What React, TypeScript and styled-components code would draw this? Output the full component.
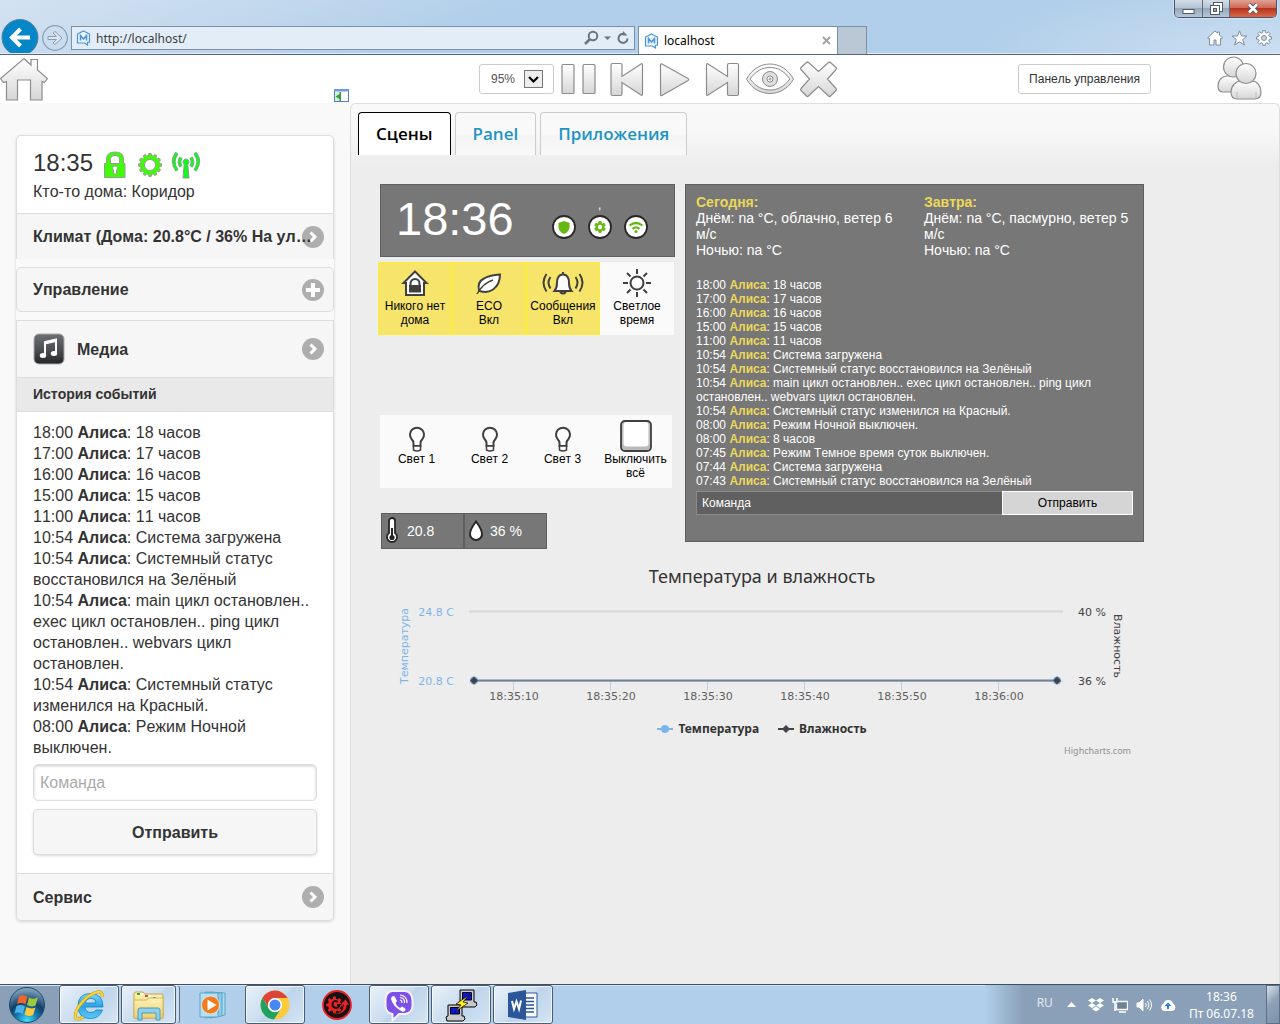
import React from "react";
import styled, { createGlobalStyle, css } from "styled-components";

const sans = `"Liberation Sans", Arial, sans-serif`;
const chrome = `"Noto Sans", "Open Sans", sans-serif`;

const GlobalStyle = createGlobalStyle`
  *, *::before, *::after { box-sizing: border-box; }
  body { margin: 0; background: #f9f9f9; font-family: ${sans}; font-kerning: none; color: #333; }
  button, input, select { font: inherit; font-kerning: none; color: inherit; margin: 0; }
  button { padding: 0; border: 0; background: none; cursor: pointer; }
  h1, h2, h3, p, ul { margin: 0; padding: 0; font-weight: normal; }
  ul { list-style: none; }
  a { color: inherit; text-decoration: none; }
  svg { display: block; flex: none; }
`;

/* ---------- window ---------- */

const Window = styled.div`
  display: flex;
  flex-direction: column;
  min-height: 100vh;
`;

const TitleBar = styled.header`
  display: flex;
  align-items: flex-end;
  height: 55px;
  padding-left: 1px;
  border-bottom: 1px solid #56637a;
  box-shadow: inset 0 -1px #e1ebf6;
  background:
    linear-gradient(160deg, #d3e2f1 0, #c4d9ee 90px, rgba(177, 207, 234, 0) 180px),
    radial-gradient(ellipse 300px 70px at 100% 100%, #cddff1, rgba(177, 207, 234, 0)),
    #b1cfea;
`;

const NavButton = styled.button<{ $lift?: number }>`
  padding-bottom: ${(p) => p.$lift ?? 1}px;
  margin-right: 3px;
`;

const AddressBar = styled.form`
  display: flex;
  align-items: center;
  flex: 0 1 564px;
  gap: 5px;
  height: 24px;
  margin: 0 3px 4px 0;
  padding: 0 5px 0 4px;
  border: 1px solid #7c90a8;
  background: #e3edf7;
  font: 12px/20px ${chrome};
`;

const UrlInput = styled.input`
  flex: 1;
  min-width: 0;
  padding: 2px 0 0;
  border: 0;
  outline: 0;
  background: none;
  color: #3c3f42;
`;

const BrowserTab = styled.div`
  display: flex;
  align-items: center;
  gap: 5px;
  width: 200px;
  height: 28px;
  padding: 0 6px 0 5px;
  border: 1px solid #7c90a8;
  border-bottom: 0;
  background: #fff;
  color: #000;
  font: 12px/20px ${chrome};
`;

const TabTitle = styled.span`
  flex: 1;
`;

const NewTab = styled.button`
  width: 29px;
  height: 28px;
  border: 1px solid #7c90a8;
  border-width: 1px 1px 0 0;
  background: #bac8d6;
`;

const WindowCorner = styled.div`
  display: flex;
  flex-direction: column;
  align-items: flex-end;
  justify-content: space-between;
  align-self: stretch;
  margin-left: auto;
  padding-right: 3px;
`;

const WindowControls = styled.div`
  display: flex;
  height: 18px;
  border: 1px solid #4a5668;
  border-top: 0;
  border-radius: 0 0 5px 5px;
  overflow: hidden;
  box-shadow: 0 0 2px #fff;
`;

const WindowControl = styled.button<{ $close?: boolean }>`
  display: grid;
  place-items: center;
  width: ${(p) => (p.$close ? 47 : 27)}px;
  background: ${(p) =>
    p.$close
      ? "linear-gradient(#e0a194, #cf6a58 45%, #b8321c 50%, #d8694c)"
      : "linear-gradient(#d3dde8, #b6c4d4 45%, #94a7bd 50%, #b5c6d8)"};
  & + & { border-left: 1px solid #5c6b80; }
`;

const ChromeTools = styled.div`
  display: flex;
  gap: 8px;
  padding: 0 5px 8px 0;
`;

/* ---------- toolbar ---------- */

const Toolbar = styled.nav`
  display: flex;
  align-items: center;
  height: 48px;
  padding-right: 17px;
  background: #fff;
`;

const ToolbarStart = styled.div`
  display: flex;
  align-items: flex-end;
  justify-content: space-between;
  flex: 0 0 350px;
  align-self: stretch;
  padding-bottom: 1px;
`;

const Player = styled.div`
  display: flex;
  align-items: center;
  margin-left: 129px;
`;

const Zoom = styled.label`
  display: grid;
  align-items: center;
  width: 75px;
  height: 30px;
  border: 1px solid #ccc;
  border-radius: 3px;
  background: #fff;
  font-size: 12px;
  color: #555;
  & > * { grid-area: 1 / 1; }
  & > svg { justify-self: end; margin-right: 10px; pointer-events: none; }
`;

const ZoomSelect = styled.select`
  height: 28px;
  padding: 0 11px;
  border: 0;
  outline: 0;
  appearance: none;
  background: none;
`;

const PanelLink = styled.a`
  margin-left: auto;
  padding: 0 10px;
  border: 1px solid #ccc;
  border-radius: 3px;
  font-size: 12px;
  line-height: 28px;
`;

const Users = styled.a`
  margin-left: 66px;
`;

/* ---------- sidebar ---------- */

const Content = styled.div`
  display: flex;
  flex: 1;
`;

const Sidebar = styled.aside`
  flex: 0 0 350px;
  min-width: 0;
  padding: 32px 16px 16px;
  background: #f9f9f9;
  font-size: 16px;
  line-height: 21px;
`;

const edge = css`
  border: 1px solid #ddd;
  background: #f6f6f6;
`;

const Menu = styled.div`
  border-radius: 5px;
  box-shadow: 0 1px 3px rgba(0, 0, 0, 0.15);
`;

const Status = styled.div`
  height: 79px;
  padding: 11px 16px;
  border: 1px solid #ddd;
  border-radius: 5px 5px 0 0;
  background: #fff;
`;

const StatusLine = styled.div`
  display: flex;
  align-items: center;
  gap: 8px;
  height: 31px;
  margin-bottom: 3px;
  font-size: 24px;
`;

const StatusIcons = styled.span`
  display: flex;
  align-items: center;
  gap: 7px;
  padding-top: 4px;
`;

const MenuItem = styled.button<{ $kind?: "open" | "group" | "media" | "last" }>`
  ${edge}
  display: flex;
  align-items: center;
  width: 100%;
  height: 45px;
  padding: 0 9px 0 16px;
  font-weight: bold;
  text-align: left;
  ${(p) => p.$kind === "open" && "border-top: 0; border-bottom: 0;"}
  ${(p) => p.$kind === "group" && "border-radius: 5px;"}
  ${(p) => p.$kind === "media" && "height: 58px; gap: 12px;"}
  ${(p) => p.$kind === "last" && "height: 48px; border-radius: 0 0 5px 5px;"}
`;

const MenuText = styled.span`
  flex: 1;
  min-width: 0;
  white-space: nowrap;
  z-index: 1;
`;

const Group = styled.div`
  padding: 8px 0;
  background: #f9f9f9;
`;

const Divider = styled.h3`
  padding: 0 16px;
  border: 1px solid #ddd;
  border-top: 0;
  background: #e9e9e9;
  font-size: 14px;
  font-weight: bold;
  line-height: 33px;
`;

const History = styled.div`
  padding: 10px 16px 18px;
  border: 1px solid #ddd;
  border-width: 0 1px;
  background: #fff;
`;

const SideForm = styled.form`
  display: grid;
  gap: 8px;
  margin-top: 6px;
`;

const SideInput = styled.input`
  width: 100%;
  height: 37px;
  padding: 0 6px;
  border: 1px solid #ddd;
  border-radius: 5px;
  background: #fff;
  box-shadow: inset 0 1px 3px rgba(0, 0, 0, 0.2);
  &::placeholder { color: #aaa; opacity: 1; }
`;

const SideButton = styled.button`
  ${edge}
  height: 46px;
  border-radius: 5px;
  box-shadow: 0 1px 3px rgba(0, 0, 0, 0.15);
  font-weight: bold;
`;

/* ---------- scene ---------- */

const Frame = styled.main`
  flex: 1;
  min-width: 0;
  padding: 8px 7px;
  border: 1px solid #ddd;
  border-bottom: 0;
  border-radius: 6px 6px 0 0;
  background: linear-gradient(#f9f9f9, #f7f7f7 30px, #ededed 60px);
`;

const Tabs = styled.div`
  display: flex;
  gap: 4px;
`;

const Tab = styled.button<{ $active?: boolean }>`
  height: 43px;
  padding: 0 17px;
  border: 1px solid ${(p) => (p.$active ? "#000" : "#ccc")};
  border-bottom: 0;
  border-radius: 4px 4px 0 0;
  background: ${(p) => (p.$active ? "#fff" : "linear-gradient(#f9f9f9 50%, #f4f4f4 55%, #f9f9f9)")};
  color: ${(p) => (p.$active ? "#000" : "#1c94c4")};
  font: 600 17px/22px "Open Sans", sans-serif;
`;

const Scene = styled.div`
  max-width: 786px;
  padding: 29px 0 0 20px;
`;

const Columns = styled.div`
  display: grid;
  grid-template-columns: 297px 1fr;
  gap: 10px;
`;

const dark = css`
  border: 1px solid #5f5f5f;
  background: #777;
  color: #fff;
`;

const Clock = styled.div`
  ${dark}
  display: flex;
  align-items: center;
  justify-content: space-between;
  height: 73px;
  margin: 0 0 5px 2px;
  padding: 0 25px 4px 15px;
  font-size: 47px;
`;

const Badges = styled.div`
  display: flex;
  gap: 10px;
  padding-top: 17px;
`;

const Badge = styled.span`
  position: relative;
`;

const Tick = styled.span`
  position: absolute;
  bottom: 28px;
  left: 11px;
  font-size: 12px;
  line-height: 14px;
`;

const Tiles = styled.div<{ $lights?: boolean }>`
  display: grid;
  grid-template-columns: repeat(4, ${(p) => (p.$lights ? 73 : 74)}px);
  padding-left: ${(p) => (p.$lights ? 2 : 0)}px;
  margin-bottom: ${(p) => (p.$lights ? 25 : 80)}px;
`;

const Tile = styled.button<{ $on?: boolean }>`
  display: flex;
  flex-direction: column;
  align-items: center;
  height: 73px;
  padding-top: 4px;
  border: 1px solid ${(p) => (p.$on ? "#fdee35" : "#fafafa")};
  background: ${(p) => (p.$on ? "#f7e56b" : "#fafafa")};
  color: #000;
  font-size: 12px;
  line-height: 14px;
`;

const Sensors = styled.div`
  display: flex;
  padding-left: 3px;
`;

const Sensor = styled.div`
  ${dark}
  display: flex;
  align-items: center;
  gap: 7px;
  width: 83px;
  height: 36px;
  padding-left: 4px;
  font-size: 14px;
`;

const InfoPanel = styled.section`
  ${dark}
  height: 358px;
  padding: 9px 10px;
  font-size: 12px;
  line-height: 14px;
`;

const Weather = styled.div`
  display: grid;
  grid-template-columns: 210px 1fr;
  gap: 18px;
  margin-bottom: 20px;
  font-size: 14px;
  line-height: 16px;
`;

const Accent = styled.b`
  color: #ecd75a;
`;

const CommandForm = styled.form`
  display: flex;
  margin-top: 3px;
`;

const CommandInput = styled.input`
  flex: 1;
  min-width: 0;
  height: 24px;
  padding: 0 5px;
  border: 1px solid #8b8b8b;
  border-right: 0;
  background: #606060;
  color: #fff;
`;

const CommandButton = styled.button`
  width: 131px;
  height: 24px;
  border: 1px solid #fff;
  background: #d5d5d5;
  color: #000;
`;

/* ---------- chart ---------- */

const Chart = styled.figure`
  margin: 15px 0 0 2px;
  text-align: center;
`;

const ChartTitle = styled.h2`
  margin-bottom: 1px;
  font: 18px/24px "Noto Sans", sans-serif;
`;

const Plot = styled.svg`
  width: 100%;
  height: auto;
  font: 11px "DejaVu Sans", sans-serif;
`;

const Legend = styled.figcaption`
  display: flex;
  justify-content: center;
  gap: 19px;
  font: bold 12px/16px "Noto Sans", sans-serif;
`;

const LegendItem = styled.span`
  display: flex;
  align-items: center;
  gap: 5px;
`;

const Credits = styled.a`
  display: block;
  margin: 7px 13px 0;
  color: #909090;
  font: 9px/14px "Noto Sans", sans-serif;
  text-align: right;
`;

/* ---------- taskbar ---------- */

const Taskbar = styled.footer`
  display: flex;
  height: 40px;
  border-top: 1px solid #3f5062;
  box-shadow: inset 0 1px #d5e4f2;
  background: linear-gradient(90deg, #8aa0b8 58px, #b1cfea 62px);
`;

const Start = styled.button`
  display: grid;
  place-items: center;
  width: 54px;
  margin-right: 5px;
`;

const Apps = styled.div`
  display: flex;
  gap: 2px;
  flex: 1;
`;

const AppButton = styled.button<{ $open?: boolean; $stack?: boolean }>`
  display: grid;
  place-items: center;
  width: ${(p) => (p.$stack ? 55 : 60)}px;
  margin-right: ${(p) => (p.$stack ? 5 : 0)}px;
  ${(p) =>
    p.$open &&
    css`
      border: 1px solid #4b5c70;
      border-radius: 3px;
      background: linear-gradient(135deg, #e9f1f9, #c9dcef 50%, #bdd4ec 52%, #d5e5f4);
      box-shadow: inset 0 0 0 1px rgba(255, 255, 255, 0.7);
    `}
  ${(p) => p.$stack && "box-shadow: inset 0 0 0 1px #eef5fb, 4px 0 0 -1px #c9dcef, 5px 0 0 -1px #5c6d80;"}
`;

const Tray = styled.div`
  display: flex;
  align-items: center;
  gap: 8px;
  padding-left: 52px;
  background: linear-gradient(90deg, #b1cfea, #8aa0b8 38px);
  color: #fff;
  font: 12px/17px ${chrome};
`;

const Language = styled.button`
  margin-right: 6px;
  padding-bottom: 5px;
  color: #e2e8ee;
`;

const TrayMore = styled.button`
  margin-right: 4px;
`;

const DateTime = styled.time`
  margin: 0 4px 0 5px;
  text-align: center;
`;

const ShowDesktop = styled.button`
  width: 14px;
  height: 39px;
  border: 1px solid #5d7084;
  background: linear-gradient(135deg, #d9e1e9, #8ca1b7 45%, #7e94ac);
`;

/* ---------- drawings ---------- */

function gear(cx: number, cy: number, outer: number, inner: number, teeth: number) {
  const points: string[] = [];
  const step = (Math.PI * 2) / teeth;
  for (let i = 0; i < teeth; i++) {
    const a = i * step - Math.PI / 2;
    [
      [-0.3, inner],
      [-0.2, outer],
      [0.2, outer],
      [0.3, inner],
    ].forEach(([k, r]) => {
      points.push(`${(cx + r * Math.cos(a + k * step)).toFixed(2)} ${(cy + r * Math.sin(a + k * step)).toFixed(2)}`);
    });
  }
  return `M${points.join("L")}Z`;
}

const HiddenSvg = styled.svg`
  position: absolute;
`;

const Defs = () => (
  <HiddenSvg width="0" height="0" aria-hidden="true">
    <defs>
      <linearGradient id="steel" x1="0" y1="0" x2="0" y2="1">
        <stop offset="0" stopColor="#fff" />
        <stop offset="1" stopColor="#d6d6d6" />
      </linearGradient>
      <radialGradient id="orb" cx=".5" cy=".95" r=".9">
        <stop offset="0" stopColor="#3fe0fc" />
        <stop offset=".35" stopColor="#1679b4" />
        <stop offset=".6" stopColor="#123f68" />
        <stop offset="1" stopColor="#7fa3bd" />
      </radialGradient>
      <linearGradient id="ie" x1="0" y1="0" x2="0" y2="1">
        <stop offset="0" stopColor="#7fd6fa" />
        <stop offset=".5" stopColor="#2aa5e6" />
        <stop offset="1" stopColor="#5cc8f6" />
      </linearGradient>
      <linearGradient id="folder" x1="0" y1="0" x2="0" y2="1">
        <stop offset="0" stopColor="#fdf3b4" />
        <stop offset="1" stopColor="#edd071" />
      </linearGradient>
      <linearGradient id="note" x1="0" y1="0" x2="0" y2="1">
        <stop offset="0" stopColor="#6b7073" />
        <stop offset=".55" stopColor="#4b4e50" />
        <stop offset="1" stopColor="#232425" />
      </linearGradient>
    </defs>
  </HiddenSvg>
);

const SiteIcon = () => (
  <svg width="15" height="16" viewBox="0 0 15 16" fill="none" stroke="#4a94d8">
    <path d="M7.5 1 13.5 4v8l-2 .5v2.500L8.500 13H1.500V4Z" strokeWidth="1.200" fill="#eef6fd" />
    <path d="M4.500 10.500v-5l3 3.500 3-3.500v5" strokeWidth="1.500" />
  </svg>
);

const steelPaths: Record<string, string[]> = {
  pause: ["M9 9.500h10q1 0 1 1v27q0 1-1 1H9q-1 0-1-1v-27q0-1 1-1Z", "M30 9.500h10q1 0 1 1v27q0 1-1 1H30q-1 0-1-1v-27q0-1 1-1Z"],
  previous: ["M10.500 8.500h8q1.500 0 1.500 1.500v11.500L39 9q1.500-1 1.500 1v29q0 2-1.500 1L20 27.500V39q0 1.500-1.500 1.500h-8Q9 40.500 9 39V10q0-1.500 1.500-1.500Z"],
  play: ["M12 9 38 23.500q1.500 1 0 2L12 40.500q-1.500.5-1.500-1V10q0-1.500 1.500-1Z"],
  next: ["M39 8.500h-8q-1.500 0-1.500 1.500v11.500L10 9q-1.500-1-1.500 1v29q0 2 1.500 1l19.500-12.500V39q0 1.500 1.500 1.500h8q1.500 0 1.500-1.500V10q0-1.500-1.500-1.500Z"],
  close: ["M12.500 7.500q1-1 2 0l10 9 10-9q1-1 2 0l5.500 5q1 1 0 2L33.500 24l8.500 9.500q1 1 0 2l-5.500 5.500q-1 1-2 0l-10-9.500-10 9.500q-1 1-2 0L7 35.500q-1-1 0-2L15.500 24 7 14.500q-1-1 0-2Z"],
  home: ["M24 4.500 31 11V5.500h6.500V16l10 8.500-3 4-2.500-1V46H30.500V26h-13v20h-11V27.500l-3 1-3-4Z"],
};

const Steel = ({ name }: { name: string }) => (
  <svg width="48" height="48" viewBox="0 0 48 48" fill="url(#steel)" stroke="#8c8c8c" strokeWidth="1.200">
    {steelPaths[name].map((d) => (
      <path key={d} d={d} />
    ))}
  </svg>
);

const Eye = () => (
  <svg width="48" height="48" viewBox="0 0 48 48" fill="url(#steel)" stroke="#8c8c8c">
    <path d="M.5 24C6 14 15 9 24 9s18 5 23.500 15C42 34 33 38.500 24 38.500S6 34 .5 24Z" />
    <path d="M4 24C10 16 16 12.500 24 12.500S38 16 44 24C38 31.500 32 35 24 35S10 31.500 4 24Z" fill="#fff" />
    <circle cx="24" cy="24" r="7.500" fill="#dedede" />
    <circle cx="24" cy="24" r="3" fill="#fff" />
    <circle cx="24" cy="24" r="1" fill="#fff" />
  </svg>
);

const People = () => (
  <svg width="46" height="48" viewBox="0 0 46 48" fill="url(#steel)" stroke="#8f8f8f" strokeWidth="1.200">
    <path d="M1 31c0-6 4-10 9-10h8c5 0 8 4 8 9v3q0 4-4 4H6q-5 0-5-6Z" />
    <circle cx="16.500" cy="12" r="10" />
    <path d="M14 37c0-6 5-11 10-11h11c5 0 9 5 9 11 0 5-2 7-6 7H20c-4 0-6-2-6-7Z" />
    <path d="M20 37v6M39 37v6" stroke="#c4c4c4" />
    <circle cx="29" cy="18.500" r="10" />
  </svg>
);

const RoundArrow = ({ plus }: { plus?: boolean }) => (
  <svg width="22" height="22" viewBox="0 0 22 22">
    <circle cx="11" cy="11" r="11" fill="#aeaeae" />
    <path
      d={plus ? "M11 4v14M4 11h14" : "m8.500 6.500 4.500 4.500-4.500 4.500"}
      fill="none"
      stroke="#fff"
      strokeWidth={plus ? 4 : 3}
    />
  </svg>
);

const Lock = () => (
  <svg width="28" height="28" viewBox="0 0 28 28" fill="#3dfc06" stroke="#999">
    <path
      fillRule="evenodd"
      d="M3.500 12.500h2V8q0-7 8.500-7t8.500 7v4.500h1.500v14H3.500Zm6 0h9V8.500q0-4-4.500-4t-4.500 4Z"
    />
    <path d="M14 15a2.200 2.200 0 0 1 1.500 4v4h-3v-4a2.200 2.200 0 0 1 1.500-4Z" fill="#fff" />
  </svg>
);

const Cog = () => (
  <svg width="28" height="28" viewBox="0 0 28 28" fill="#3dfc06" stroke="#999">
    <path d={gear(14, 14, 11.5, 9.5, 12)} />
    <circle cx="14" cy="14" r="5.500" fill="#fff" />
  </svg>
);

const Antenna = () => {
  const arcs = "M9 6.500q-3 4.500 0 9M19 6.500q3 4.500 0 9M5 2q-6.500 8.500 0 17.500M23 2q6.500 8.500 0 17.500";
  return (
    <svg width="30" height="28" viewBox="-1 0 30 28" fill="none">
      <path d={arcs} stroke="#999" strokeWidth="3.800" />
      <path d={arcs} stroke="#0dfc1a" strokeWidth="2.200" />
      <path d="M14 8a3 3 0 0 1 1.800 5.400L17 27h-6l1.200-13.600A3 3 0 0 1 14 8Z" fill="#0dfc1a" stroke="#999" />
    </svg>
  );
};

const MusicIcon = () => (
  <svg width="32" height="32" viewBox="0 0 32 32">
    <rect x="1" y="1" width="30" height="30" rx="5" fill="url(#note)" stroke="#aaa" />
    <path d="M12 22V9l11-2.500V20" fill="none" stroke="#fff" strokeWidth="2" />
    <path d="M12 8.500 23 6v3l-11 2.500Z" fill="#fff" />
    <ellipse cx="10" cy="22.500" rx="3.200" ry="2.500" fill="#fff" />
    <ellipse cx="21" cy="20.500" rx="3.200" ry="2.500" fill="#fff" />
  </svg>
);

const badgeShapes = {
  shield: <path d="M13 7l5.500 2v4q0 4.500-5.500 7-5.500-2.500-5.500-7V9Z" fill="#63b90f" />,
  gear: (
    <>
      <path d={gear(13, 13, 5.5, 4, 6)} fill="#63b90f" stroke="#63b90f" />
      <circle cx="13" cy="13" r="2.200" fill="#fff" />
    </>
  ),
  wifi: (
    <>
      <path d="M6.500 11.500q6.500-5 13 0M9.500 14.800q3.500-2.800 7 0" fill="none" stroke="#63b90f" strokeWidth="2.200" />
      <circle cx="13" cy="17.500" r="1.600" fill="#63b90f" />
    </>
  ),
};

const BadgeIcon = ({ name }: { name: keyof typeof badgeShapes }) => (
  <svg width="26" height="26" viewBox="0 0 26 26">
    <circle cx="13" cy="13" r="11" fill="#fff" stroke="#272727" strokeWidth="1.800" />
    {badgeShapes[name]}
  </svg>
);

const line = { fill: "none", stroke: "#404040", strokeWidth: 2 };

const HomeLock = () => (
  <svg width="34" height="32" viewBox="0 0 34 32" {...line}>
    <path d="M17 4.500 5.500 16H8v12h18V16h2.500Z" fill="#fff" />
    <path d="M12.500 19v-2.500a4.500 4.500 0 0 1 9 0V19" />
    <path d="M11 18h12v7.500H11Z" fill="#404040" stroke="none" />
  </svg>
);

const Leaf = () => (
  <svg width="34" height="32" viewBox="0 0 34 32" {...line}>
    <path d="M7 23.500Q5 15 12 11.500 18 8 28 7.500q0 10-7 15-6 4-13 1.500Z" fill="#fff" />
    <path d="M5 27q6-11 16-14" strokeWidth="1.500" />
  </svg>
);

const Bell = () => (
  <svg width="46" height="32" viewBox="0 0 46 32" {...line}>
    <path d="M14.500 24h17q-2.500-3-2.500-8 0-8.500-6-8.500T17 16q0 5-2.500 8Z" fill="#fff" />
    <path d="M20 25q3 3 6 0M23 5v2" />
    <path d="M10.500 10q-4 5.500 0 11.500M6.500 7q-6 8.500 0 17.500M35.500 10q4 5.500 0 11.500M39.500 7q6 8.500 0 17.500" />
  </svg>
);

const Sun = () => (
  <svg width="34" height="32" viewBox="0 0 34 32" {...line}>
    <circle cx="17" cy="16" r="6.500" fill="#fff" />
    <path d="M17 2v5M17 25v5M3 16h5M26 16h5M7 6l3.500 3.500M23.500 22.500 27 26M7 26l3.500-3.500M23.500 9.500 27 6" />
  </svg>
);

const Bulb = () => (
  <svg width="34" height="32" viewBox="0 0 34 32" {...line}>
    <path d="M13.500 26v-3q0-2-2-4a7 7 0 1 1 11 0q-2 2-2 4v3Z" fill="#fff" />
    <path d="M13.500 26v4q3.500 2 7 0v-4Z" fill="#fff" strokeWidth="1.500" />
  </svg>
);

const Switch = () => (
  <svg width="34" height="32" viewBox="0 0 34 32">
    <rect x="2" y="1" width="30" height="30" rx="4" fill="#bbb" stroke="#404040" strokeWidth="1.800" />
    <rect x="4.500" y="2" width="25" height="24.500" rx="3" fill="#fff" />
  </svg>
);

const Thermometer = () => (
  <svg width="14" height="28" viewBox="1 0 14 28">
    <path d="M4 16V4a3 3 0 0 1 6 0v12a5 5 0 1 1-6 0Z" fill="#fff" stroke="#272727" strokeWidth="1.800" />
    <path d="M7 11v9" stroke="#272727" strokeWidth="2" />
    <circle cx="7" cy="20.500" r="2.600" fill="#272727" />
  </svg>
);

const Drop = () => (
  <svg width="14" height="22" viewBox="0 0 14 22">
    <path d="M7 1.500q6 8 6 12.500a6 6 0 0 1-12 0Q1 9.500 7 1.500Z" fill="#fff" stroke="#272727" strokeWidth="2" />
  </svg>
);

/* ---------- taskbar drawings ---------- */

const StartOrb = () => (
  <svg width="38" height="38" viewBox="0 0 38 38">
    <circle cx="19" cy="19" r="17.500" fill="url(#orb)" stroke="#1e4869" />
    <path d="M11 10.500q4-2.500 8.500.5l-2 7.500q-4-2.500-8.500-.5Z" fill="#f0642a" />
    <path d="M21 11.500q4 2.500 9 0l-2.500 8q-4 2-8.500-.5Z" fill="#9ccb3b" />
    <path d="M8.500 20q4.500-2 8.500.5l-2.500 7.500q-4-2.500-8-.5Z" fill="#4fb1ea" />
    <path d="M18.500 21q4.500 2.500 9 .5l-2.500 7.500q-4.500 2-8.500-.5Z" fill="#fbc93a" />
  </svg>
);

const InternetExplorer = () => (
  <svg width="34" height="34" viewBox="0 0 34 34" fill="none">
    <path
      fillRule="evenodd"
      d="M31 19H13q.5 5.500 6 5.500 3.500 0 5-2.500h6.500q-3 8.500-12 8.500Q6 30.500 6 18T18.500 5.500 31 19Zm-7-4q-.5-4.500-5-4.500T13 15Z"
      fill="url(#ie)"
      stroke="#1581c4"
      strokeWidth=".8"
    />
    <path d="M30 9q1-6-4.500-5Q17 6 9.500 15T3.500 30q2.500 2.500 8-1" stroke="#c99a10" strokeWidth="3" />
    <path d="M30 9q1-6-4.500-5Q17 6 9.500 15T3.500 30q2.500 2.500 8-1" stroke="#fcd52e" strokeWidth="2" />
  </svg>
);

const Explorer = () => (
  <svg width="34" height="34" viewBox="0 0 34 34">
    <path d="M2 6q0-2 2-2h7l2 2h16q2 0 2 2v22H2Z" fill="url(#folder)" stroke="#c9a548" />
    <path d="M5 5h6v2H5ZM12 7h7v2h-7ZM21 9h7v2h-7Z" fill="#fff" />
    <path d="M5 5h3v2H5Z" fill="#2cb233" />
    <path d="M13 7h3v2h-3Z" fill="#d8472b" />
    <path d="M21 9h3v2h-3Z" fill="#2c83e0" />
    <path d="M2 12h13l2-2h14v20H2Z" fill="url(#folder)" stroke="#d4b456" />
    <path d="M6 32V22q0-2 2-2h18q2 0 2 2v10h-4v-7H10v7Z" fill="#8fcfea" stroke="#4a9cc0" />
  </svg>
);

const MediaPlayer = () => (
  <svg width="34" height="34" viewBox="0 0 34 34">
    <path d="m14 4 15 1v22l-15 3Z" fill="#a8dcf2" stroke="#5aa4c8" />
    <path d="m9 4 17 1v23l-17 2Z" fill="#8bcbe9" stroke="#5aa4c8" />
    <path d="M4 5h18v24H4Z" fill="#b4e0f3" stroke="#5aa4c8" />
    <circle cx="14.500" cy="17" r="9" fill="#f6791c" stroke="#e0e0e0" />
    <path d="m11.500 11.500 9 5.500-9 5.500Z" fill="#fff" />
  </svg>
);

const ChromeIcon = () => (
  <svg width="32" height="32" viewBox="0 0 32 32">
    <circle cx="16" cy="16" r="14.500" fill="#fbcb3b" />
    <path d="M3.500 8.700A14.500 14.500 0 0 1 28.600 9H16a7 7 0 0 0-6.300 10Z" fill="#dc4437" />
    <path d="M3.500 8.700A14.500 14.500 0 0 0 15 30.500l7-11a7 7 0 0 1-12.300 0Z" fill="#1da261" />
    <circle cx="16" cy="16" r="7" fill="#fff" />
    <circle cx="16" cy="16" r="5.500" fill="#4688f1" />
  </svg>
);

const RedGear = () => (
  <svg width="32" height="32" viewBox="0 0 32 32">
    <circle cx="16" cy="16" r="14" fill="#171314" stroke="#ea2227" strokeWidth="1.800" />
    <path d={gear(13.5, 16, 8.5, 6.5, 8)} fill="#ea2227" />
    <path d="M13 24.500q9 0 9.500-8.500H19l5.500-6 4 6H26q-1 9.500-13 9.500Z" fill="#ea2227" stroke="#171314" strokeWidth=".6" />
    <path d="M17 13q-4-2.500-5.500 1.500-.5 4 3.500 4.500 3 0 3-3h-2" fill="none" stroke="#171314" strokeWidth="2" />
  </svg>
);

const Viber = () => (
  <svg width="32" height="34" viewBox="0 0 32 34">
    <path
      d="M9 3h13q7 1 7.500 9v6q-.5 7-7.500 8h-6l-6.500 6.500V26Q3 25 2.500 18v-7Q3 4 9 3Z"
      fill="#7d51e8"
      stroke="#f5f2ff"
      strokeWidth="2"
    />
    <path d="M10 8q-2 1-2 3 1.500 7 11 12.500 2 1 3.500-1.500.5-1-1-2l-2.500-1.500-2 1.500q-3.500-1.500-4.500-5l1.500-2L12 9q-1-1.500-2-1Z" fill="#fff" />
    <path d="M17 12q2 0 2 3M17 9.500q5 .5 4.500 5.500M17 7q7 .5 7 8" fill="none" stroke="#fff" strokeWidth="1.200" />
  </svg>
);

const Putty = () => (
  <svg width="34" height="34" viewBox="0 0 34 34" stroke="#000">
    <path d="M16 2h14v12h2l1 3-2 2H15l-1-4 2-2Z" fill="#c9c9c9" />
    <path d="M18.500 4.500h9v7.500h-9Z" fill="#0b17d8" />
    <path d="M4 17h14v11h2l1 3-2 2H3l-1-4 2-1Z" fill="#c9c9c9" />
    <path d="M6.500 19.500h9V26h-9Z" fill="#0b17d8" />
    <path d="m25 7-13 9 5 1-6 7 13-9-5-1Z" fill="#ffee1a" strokeWidth=".7" />
  </svg>
);

const Word = () => (
  <svg width="34" height="32" viewBox="0 0 34 32">
    <path d="M17 4h14v24H17Z" fill="#fff" stroke="#2b579a" />
    <path d="M20 9h8M20 12.500h8M20 16h8M20 19.500h8M20 23h8" stroke="#2b579a" strokeWidth="1.500" />
    <path d="M2 4 20 1v30L2 28Z" fill="#2b579a" />
    <path d="m6 12 2 8 2.500-7.500L13 20l2-8.500" fill="none" stroke="#fff" strokeWidth="2" />
  </svg>
);

/* ---------- data ---------- */

const sideHistory = [
  ["18:00", "18 часов"],
  ["17:00", "17 часов"],
  ["16:00", "16 часов"],
  ["15:00", "15 часов"],
  ["11:00", "11 часов"],
  ["10:54", "Система загружена"],
  ["10:54", "Системный статус восстановился на Зелёный"],
  ["10:54", "main цикл остановлен.. exec цикл остановлен.. ping цикл остановлен.. webvars цикл остановлен."],
  ["10:54", "Системный статус изменился на Красный."],
  ["08:00", "Режим Ночной выключен."],
];

const sceneHistory = [
  ...sideHistory,
  ["08:00", "8 часов"],
  ["07:45", "Режим Темное время суток выключен."],
  ["07:44", "Система загружена"],
  ["07:43", "Системный статус восстановился на Зелёный"],
];

const ticks = ["18:35:10", "18:35:20", "18:35:30", "18:35:40", "18:35:50", "18:36:00"];

const apps = [
  { name: "Internet Explorer", icon: <InternetExplorer />, open: true },
  { name: "Проводник", icon: <Explorer />, open: true, stack: true },
  { name: "Windows Media Player", icon: <MediaPlayer /> },
  { name: "Google Chrome", icon: <ChromeIcon />, open: true },
  { name: "Driver Booster", icon: <RedGear /> },
  { name: "Viber", icon: <Viber />, open: true },
  { name: "PuTTY", icon: <Putty />, open: true },
  { name: "Word", icon: <Word />, open: true },
];

const stay = (e: React.FormEvent) => e.preventDefault();

/* ---------- sections ---------- */

const BrowserHeader = () => (
  <TitleBar>
    <NavButton aria-label="Назад">
      <svg width="38" height="34" viewBox="0 0 38 34">
        <circle cx="19" cy="18.500" r="18" fill="#0486c8" stroke="#5d7f9c" />
        <path d="M29 18.500H12M19.500 10 11 18.500l8.500 8.500" fill="none" stroke="#fff" strokeWidth="4" />
      </svg>
    </NavButton>
    <NavButton aria-label="Вперёд" $lift={3}>
      <svg width="26" height="26" viewBox="0 0 26 26" fill="none" stroke="#8c9db2">
        <circle cx="13" cy="13" r="12.300" strokeWidth="1.200" />
        <path d="M6 11.500h8.500L11 8l2-1.500 7 6.500-7 6.500-2-1.500 3.500-3.500H6Z" fill="#dbe7f3" />
      </svg>
    </NavButton>
    <AddressBar onSubmit={stay}>
      <SiteIcon />
      <UrlInput aria-label="Адрес" defaultValue="http://localhost/" />
      <svg width="45" height="16" viewBox="0 0 45 16" fill="none" stroke="#6d747c" strokeWidth="2">
        <circle cx="9" cy="6" r="4.300" />
        <path d="m6 9-5 5" strokeWidth="2.500" />
        <path d="M20 6.500h7l-3.500 3.500Z" fill="#6d747c" stroke="none" />
        <path d="M43.500 8.500a4.500 4.500 0 1 1-3.500-4.500" />
        <path d="M39 1l4.500 4.500H39Z" fill="#6d747c" stroke="none" />
      </svg>
    </AddressBar>
    <BrowserTab>
      <SiteIcon />
      <TabTitle>localhost</TabTitle>
      <button aria-label="Закрыть вкладку">
        <svg width="9" height="9" viewBox="0 0 9 9" stroke="#a2a2a2" strokeWidth="2">
          <path d="m1 1 7 7M8 1 1 8" />
        </svg>
      </button>
    </BrowserTab>
    <NewTab aria-label="Новая вкладка" />
    <WindowCorner>
      <WindowControls>
        <WindowControl aria-label="Свернуть">
          <svg width="13" height="14" viewBox="0 0 13 14">
            <rect x="1" y="7.500" width="11" height="4" fill="#fff" stroke="#535a6a" />
          </svg>
        </WindowControl>
        <WindowControl aria-label="Развернуть">
          <svg width="13" height="13" viewBox="0 0 13 13" fill="#fff" stroke="#535a6a">
            <rect x="3.500" y=".5" width="9" height="9" />
            <rect x=".5" y="3.500" width="9" height="9" />
            <rect x="3.500" y="6.500" width="3" height="3" fill="#9aabc0" />
          </svg>
        </WindowControl>
        <WindowControl aria-label="Закрыть" $close>
          <svg width="12" height="11" viewBox="0 0 12 11">
            <path d="M2 1.500 10 9.500M10 1.500 2 9.500" stroke="#535a6a" strokeWidth="4.500" />
            <path d="M2 1.500 10 9.500M10 1.500 2 9.500" stroke="#fff" strokeWidth="2.500" />
          </svg>
        </WindowControl>
      </WindowControls>
      <ChromeTools>
        <button aria-label="Домой">
          <svg width="16" height="16" viewBox="0 0 16 16" fill="#fff" stroke="#7f8ea1">
            <path d="M8 1 .500 8l1.500 1 .5-.5V15H7v-5h2v5h4.500V8.500l.5.5 1.500-1-3-3V2h-2v1Z" />
          </svg>
        </button>
        <button aria-label="Избранное">
          <svg width="17" height="16" viewBox="0 0 17 16" fill="#fff" stroke="#7f8ea1">
            <path d="m8.500.800 2 5.200h5.500l-4.300 3.500 1.600 5.500-4.800-3.200L3.700 15l1.600-5.500L1 6h5.500Z" />
          </svg>
        </button>
        <button aria-label="Сервис">
          <svg width="16" height="16" viewBox="0 0 16 16" fill="#fff" stroke="#7f8ea1">
            <path d={gear(8, 8, 7.5, 5.6, 8)} />
            <circle cx="8" cy="8" r="2.500" fill="#bfd5eb" />
          </svg>
        </button>
      </ChromeTools>
    </WindowCorner>
  </TitleBar>
);

const TopToolbar = () => (
  <Toolbar>
    <ToolbarStart>
      <a href="#home" aria-label="Главная">
        <Steel name="home" />
      </a>
      <button aria-label="Скрыть панель">
        <svg width="17" height="14" viewBox="0 0 17 14">
          <rect x="1.500" y="1.500" width="14" height="12" fill="#fff" stroke="#4f80c2" />
          <path d="M1 1h15v2.500H1Z" fill="#6b9bdc" />
          <path d="M2 4h6v9H2Z" fill="#d4efd2" />
          <path d="M8 4v9H6.500v-2L2.500 8.500l4-2.500V4Z" fill="#379b3b" />
        </svg>
      </button>
    </ToolbarStart>
    <Player>
      <Zoom>
        <ZoomSelect aria-label="Масштаб" defaultValue="95">
          <option value="95">95%</option>
          <option value="100">100%</option>
        </ZoomSelect>
        <svg width="19" height="18" viewBox="0 0 19 18">
          <rect x=".5" y=".5" width="18" height="17" fill="#eee" stroke="#777" />
          <path d="m5 7 4.500 4.500L14 7" fill="none" stroke="#000" strokeWidth="2.200" />
        </svg>
      </Zoom>
      <button aria-label="Пауза"><Steel name="pause" /></button>
      <button aria-label="Предыдущий"><Steel name="previous" /></button>
      <button aria-label="Воспроизвести"><Steel name="play" /></button>
      <button aria-label="Следующий"><Steel name="next" /></button>
      <button aria-label="Просмотр"><Eye /></button>
      <button aria-label="Закрыть"><Steel name="close" /></button>
    </Player>
    <PanelLink href="#admin">Панель управления</PanelLink>
    <Users href="#users" aria-label="Пользователи">
      <People />
    </Users>
  </Toolbar>
);

const SidePanel = () => (
  <Sidebar>
    <Menu>
      <Status>
        <StatusLine>
          <span>18:35</span>
          <StatusIcons>
            <Lock />
            <Cog />
            <Antenna />
          </StatusIcons>
        </StatusLine>
        <p>Кто-то дома: Коридор</p>
      </Status>
      <MenuItem $kind="open">
        <MenuText>Климат (Дома: 20.8°C / 36% На ул…</MenuText>
        <RoundArrow />
      </MenuItem>
      <Group>
        <MenuItem $kind="group">
          <MenuText>Управление</MenuText>
          <RoundArrow plus />
        </MenuItem>
      </Group>
      <MenuItem $kind="media">
        <MusicIcon />
        <MenuText>Медиа</MenuText>
        <RoundArrow />
      </MenuItem>
      <Divider>История событий</Divider>
      <History>
        <ul>
          {sideHistory.map(([time, text]) => (
            <li key={time + text}>
              {time} <b>Алиса</b>: {text}
            </li>
          ))}
        </ul>
        <SideForm onSubmit={stay}>
          <SideInput aria-label="Команда" placeholder="Команда" />
          <SideButton>Отправить</SideButton>
        </SideForm>
      </History>
      <MenuItem $kind="last">
        <MenuText>Сервис</MenuText>
        <RoundArrow />
      </MenuItem>
    </Menu>
  </Sidebar>
);

const ClimateChart = () => (
  <Chart>
    <ChartTitle>Температура и влажность</ChartTitle>
    <Plot viewBox="0 0 764 132" role="img" aria-label="Температура и влажность">
      <path d="M89 22.500h594" stroke="#d8d8d8" strokeWidth="2" />
      <path d="M89 92.500h594" stroke="#c0d0e0" />
      {ticks.map((label, i) => (
        <g key={label}>
          <path d={`M${133.5 + i * 97} 93v9`} stroke="#c0d0e0" />
          <text x={134 + i * 97} y="111" textAnchor="middle" fill="#606060">
            {label}
          </text>
        </g>
      ))}
      <path d="M94 91.500h583" stroke="#728197" strokeWidth="2" />
      {[94, 677].map((x) => (
        <g key={x}>
          <circle cx={x} cy="91.500" r="4" fill="#7cb5ec" />
          <path d={`M${x} 87.500l4 4-4 4-4-4Z`} fill="#434348" />
        </g>
      ))}
      <g fill="#7cb5ec">
        <text x="74" y="27" textAnchor="end">24.8 C</text>
        <text x="74" y="96" textAnchor="end">20.8 C</text>
        <text transform="translate(28 57) rotate(270)" textAnchor="middle">Температура</text>
      </g>
      <g fill="#434348">
        <text x="698" y="27">40 %</text>
        <text x="698" y="96">36 %</text>
        <text transform="translate(734 57) rotate(90)" textAnchor="middle">Влажность</text>
      </g>
    </Plot>
    <Legend>
      <LegendItem>
        <svg width="16" height="10" viewBox="0 0 16 10" fill="#7cb5ec">
          <path d="M0 4h16v2H0Z" />
          <circle cx="8" cy="5" r="4" />
        </svg>
        Температура
      </LegendItem>
      <LegendItem>
        <svg width="16" height="10" viewBox="0 0 16 10" fill="#434348">
          <path d="M0 4h16v2H0ZM8 1l4 4-4 4-4-4Z" />
        </svg>
        Влажность
      </LegendItem>
    </Legend>
    <Credits href="#highcharts">Highcharts.com</Credits>
  </Chart>
);

const SceneView = () => (
  <Frame>
    <Tabs>
      <Tab $active>Сцены</Tab>
      <Tab>Panel</Tab>
      <Tab>Приложения</Tab>
    </Tabs>
    <Scene>
      <Columns>
        <div>
          <Clock>
            18:36
            <Badges>
              <Badge><BadgeIcon name="shield" /></Badge>
              <Badge>
                <Tick>,</Tick>
                <BadgeIcon name="gear" />
              </Badge>
              <Badge><BadgeIcon name="wifi" /></Badge>
            </Badges>
          </Clock>
          <Tiles>
            <Tile $on><HomeLock />Никого нет<br />дома</Tile>
            <Tile $on><Leaf />ECO<br />Вкл</Tile>
            <Tile $on><Bell />Сообщения<br />Вкл</Tile>
            <Tile><Sun />Светлое<br />время</Tile>
          </Tiles>
          <Tiles $lights>
            <Tile><Bulb />Свет 1</Tile>
            <Tile><Bulb />Свет 2</Tile>
            <Tile><Bulb />Свет 3</Tile>
            <Tile><Switch />Выключить<br />всё</Tile>
          </Tiles>
          <Sensors>
            <Sensor><Thermometer />20.8</Sensor>
            <Sensor><Drop />36 %</Sensor>
          </Sensors>
        </div>
        <InfoPanel>
          <Weather>
            <div>
              <Accent>Сегодня:</Accent>
              <p>Днём: na °C, облачно, ветер 6 м/с</p>
              <p>Ночью: na °C</p>
            </div>
            <div>
              <Accent>Завтра:</Accent>
              <p>Днём: na °C, пасмурно, ветер 5 м/с</p>
              <p>Ночью: na °C</p>
            </div>
          </Weather>
          <ul>
            {sceneHistory.map(([time, text]) => (
              <li key={time + text}>
                {time} <Accent>Алиса</Accent>: {text}
              </li>
            ))}
          </ul>
          <CommandForm onSubmit={stay}>
            <CommandInput aria-label="Команда" defaultValue="Команда" />
            <CommandButton>Отправить</CommandButton>
          </CommandForm>
        </InfoPanel>
      </Columns>
      <ClimateChart />
    </Scene>
  </Frame>
);

const SystemBar = () => (
  <Taskbar>
    <Start aria-label="Пуск">
      <StartOrb />
    </Start>
    <Apps>
      {apps.map((app) => (
        <AppButton key={app.name} aria-label={app.name} $open={app.open} $stack={app.stack}>
          {app.icon}
        </AppButton>
      ))}
    </Apps>
    <Tray>
      <Language>RU</Language>
      <TrayMore aria-label="Скрытые значки">
        <svg width="9" height="5" viewBox="0 0 9 5">
          <path d="M4.500 0 9 5H0Z" fill="#fff" />
        </svg>
      </TrayMore>
      <svg width="16" height="16" viewBox="0 0 16 16" fill="#fff">
        <path d="m4 1 4 2.500-4 2.500L0 3.500ZM12 1l4 2.500L12 6 8 3.500ZM4 6l4 2.500L4 11 0 8.500ZM12 6l4 2.500L12 11 8 8.500ZM8 9.500l4 2.500-4 2.500L4 12Z" />
      </svg>
      <svg width="16" height="16" viewBox="0 0 16 16" fill="none" stroke="#fff">
        <path d="M6 4.500h9.500v8H4.500v-6" fill="#6d8197" strokeWidth="1.300" />
        <path d="M1 1v4h4V1M3 5v9M7 15h7" strokeWidth="1.500" />
      </svg>
      <svg width="16" height="16" viewBox="0 0 16 16" fill="none" stroke="#fff">
        <path d="M1 6h2l4-4v12L3 10H1Z" fill="#fff" />
        <path d="M9.500 6q1.500 2 0 4M11.500 4q3 4 0 8M13.500 2.500q4 5.500 0 11" />
      </svg>
      <svg width="16" height="16" viewBox="0 0 16 16">
        <path d="M4 14a4 4 0 0 1-.5-7.500A5 5 0 0 1 13 6.500 4 4 0 0 1 12.500 14Z" fill="#fff" />
        <path d="m8 5.500 3.500 3.500h-2.500v3H7V9H4.500Z" fill="#2d7cf0" />
      </svg>
      <DateTime>
        18:36
        <br />
        Пт 06.07.18
      </DateTime>
      <ShowDesktop aria-label="Показать рабочий стол" />
    </Tray>
  </Taskbar>
);

export default function App() {
  return (
    <Window>
      <GlobalStyle />
      <Defs />
      <BrowserHeader />
      <TopToolbar />
      <Content>
        <SidePanel />
        <SceneView />
      </Content>
      <SystemBar />
    </Window>
  );
}
